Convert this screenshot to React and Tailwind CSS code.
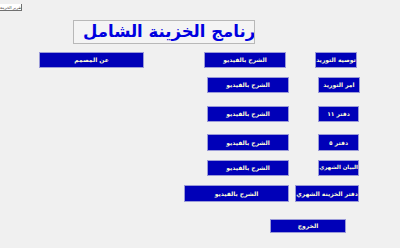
const btn =
  'flex items-center justify-center bg-[#0000b8] border border-[#9a9ad8] text-[#ffffd8] font-bold leading-none whitespace-nowrap overflow-hidden'

function Btn({ label, className = '', size = 'text-[6px]' }) {
  return (
    <div dir="rtl" className={`${btn} ${size} ${className}`}>
      {label}
    </div>
  )
}

export default function App() {
  return (
    <div
      className="w-[400px] h-[248px] bg-[#f0f0f0] overflow-hidden flex flex-col"
      style={{ fontFamily: '"DejaVu Sans", "Noto Sans", sans-serif' }}
    >
      {/* tiny report button */}
      <div className="mt-[4px] h-[7px] w-[22px] bg-white border-r border-b border-[#707070] text-[4px] leading-[7px] text-[#333] whitespace-nowrap overflow-hidden text-left">
        <span dir="rtl">تقرير الخزينة</span>
      </div>

      {/* title */}
      <div className="mt-[9px] ml-[73px] w-[182px] h-[24px] bg-[#f4f4f4] border border-[#b8b8b8] overflow-hidden whitespace-nowrap flex items-center pl-[9px]">
        <span dir="rtl" className="text-[16.5px] font-bold text-[#0000e0] leading-none shrink-0">
          برنامج الخزينة الشامل
        </span>
      </div>

      {/* row 1 */}
      <div className="mt-[8px] flex h-[16px]">
        <Btn label="عن المصمم" className="ml-[39px] w-[105px]" />
        <Btn label="الشرح بالفيديو" className="ml-[60px] w-[82px]" />
        <Btn label="توصية التوريد" className="ml-[29px] w-[42px]" />
      </div>

      {/* row 2 */}
      <div className="mt-[9px] flex h-[16px]">
        <Btn label="الشرح بالفيديو" className="ml-[207px] w-[82px]" />
        <Btn label="امر التوريد" className="ml-[29px] w-[42px]" />
      </div>

      {/* row 3 */}
      <div className="mt-[13px] flex h-[16px]">
        <Btn label="الشرح بالفيديو" className="ml-[207px] w-[82px]" />
        <Btn label="دفتر ١١" className="ml-[29px] w-[41px]" />
      </div>

      {/* row 4 */}
      <div className="mt-[12px] flex h-[17px]">
        <Btn label="الشرح بالفيديو" className="ml-[207px] w-[82px]" />
        <Btn label="دفتر ٥" className="ml-[29px] w-[41px]" />
      </div>

      {/* row 5 */}
      <div className="mt-[9px] flex h-[16px]">
        <Btn label="الشرح بالفيديو" className="ml-[207px] w-[82px]" />
        <Btn label="البيان الشهري" size="text-[5.5px]" className="ml-[29px] w-[41px]" />
      </div>

      {/* row 6 */}
      <div className="mt-[9px] flex h-[17px]">
        <Btn label="الشرح بالفيديو" className="ml-[184px] w-[105px]" />
        <Btn label="دفتر الخزينة الشهري" className="ml-[6px] w-[64px]" />
      </div>

      {/* exit */}
      <div className="mt-[17px] flex h-[14px]">
        <Btn label="الخروج" className="ml-[270px] w-[76px]" />
      </div>
    </div>
  )
}
